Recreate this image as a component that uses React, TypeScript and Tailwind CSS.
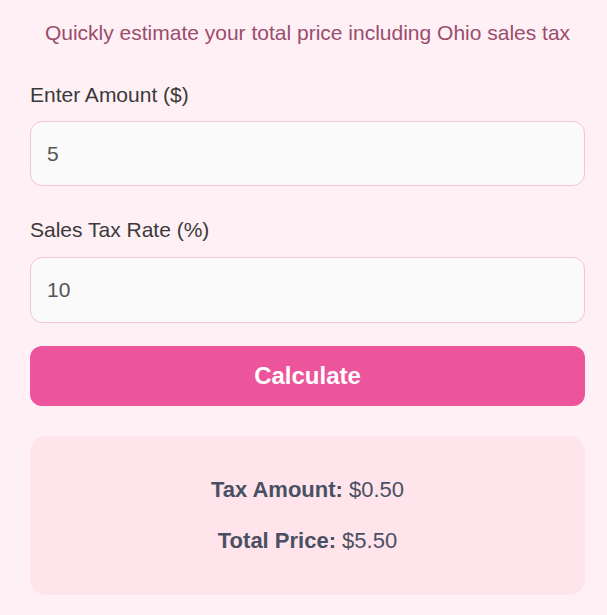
import { useState } from 'react'

export default function App() {
  const [amount, setAmount] = useState('5')
  const [rate, setRate] = useState('10')
  const [result, setResult] = useState({ tax: 0.5, total: 5.5 })

  const calculate = () => {
    const a = parseFloat(amount) || 0
    const r = parseFloat(rate) || 0
    const tax = (a * r) / 100
    setResult({ tax, total: a + tax })
  }

  return (
    <div className="min-h-screen bg-[#fff0f5] pl-[30px] pr-[22px] pt-[19px] pb-5 font-['Liberation_Sans',Arial,sans-serif]">
      <p className="text-center text-[21px] leading-[28px] text-[#9a4d6c]">
        Quickly estimate your total price including Ohio sales tax
      </p>

      <label className="mt-[34px] block text-[21px] leading-[28px] text-[#3a3a3a]">Enter Amount ($)</label>
      <input
        type="number"
        value={amount}
        onChange={e => setAmount(e.target.value)}
        className="mt-3 block h-[65px] w-full rounded-xl border border-[#f4c4d2] bg-[#fafafa] px-4 text-[21px] text-[#555] outline-none"
      />

      <label className="mt-[30px] block text-[21px] leading-[28px] text-[#3a3a3a]">Sales Tax Rate (%)</label>
      <input
        type="number"
        value={rate}
        onChange={e => setRate(e.target.value)}
        className="mt-[13px] block h-[66px] w-full rounded-xl border border-[#f4c4d2] bg-[#fafafa] px-4 text-[21px] text-[#555] outline-none"
      />

      <button
        onClick={calculate}
        className="mt-[23px] block h-[60px] w-full rounded-xl bg-[#ec559b] text-[24px] font-bold text-white"
      >
        Calculate
      </button>

      <div className="mt-[30px] flex h-[159px] flex-col items-center justify-center gap-[23px] rounded-2xl bg-[#ffe4eb] text-[22px] leading-[28px] text-[#4a5063]">
        <p><span className="font-bold">Tax Amount:</span> ${result.tax.toFixed(2)}</p>
        <p><span className="font-bold">Total Price:</span> ${result.total.toFixed(2)}</p>
      </div>
    </div>
  )
}
